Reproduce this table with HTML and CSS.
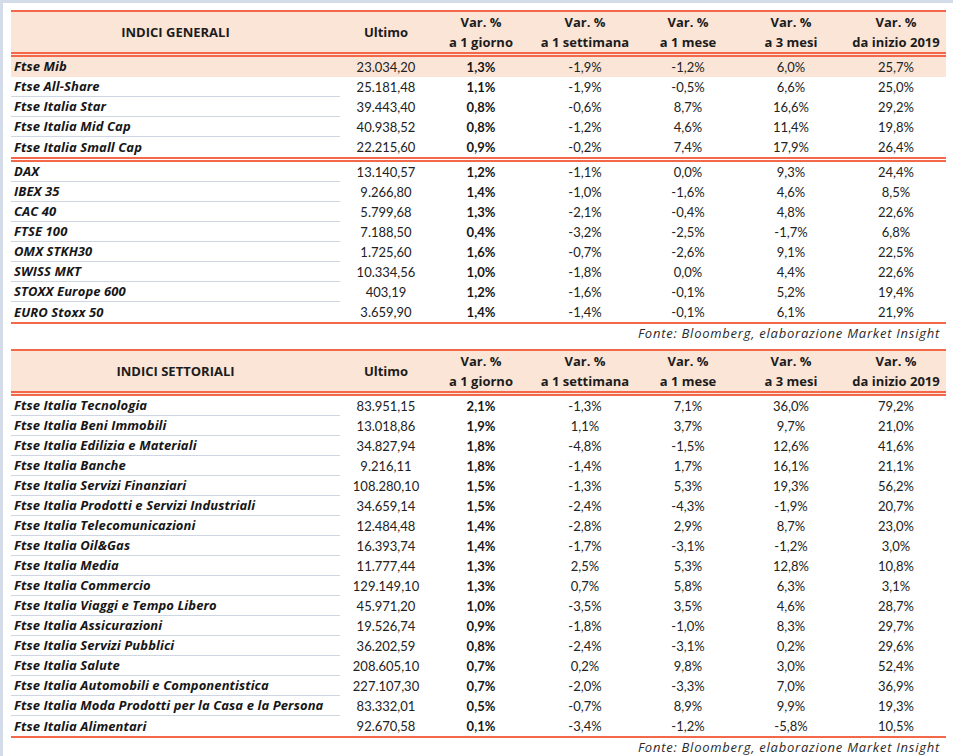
FILE: index.html
```html
<!DOCTYPE html>
<html lang="it">
<head>
<meta charset="utf-8">
<title>Indici</title>
<link rel="stylesheet" href="styles.css">
</head>
<body>
<div class="frame">
  <table class="grid">
    <colgroup>
      <col class="c-name"><col class="c-ult"><col class="c-g"><col class="c-s"><col class="c-m"><col class="c-3m"><col class="c-y">
    </colgroup>
    <thead>
      <tr>
        <th class="name-h">INDICI GENERALI</th>
        <th>Ultimo</th>
        <th><span class="l">Var. %</span><span class="l">a 1 giorno</span></th>
        <th><span class="l">Var. %</span><span class="l">a 1 settimana</span></th>
        <th><span class="l">Var. %</span><span class="l">a 1 mese</span></th>
        <th><span class="l">Var. %</span><span class="l">a 3 mesi</span></th>
        <th><span class="l">Var. %</span><span class="l">da inizio 2019</span></th>
      </tr>
    </thead>
    <tbody>
      <tr class="hl"><td class="name">Ftse Mib</td><td>23.034,20</td><td class="b">1,3%</td><td>-1,9%</td><td>-1,2%</td><td>6,0%</td><td>25,7%</td></tr>
      <tr><td class="name">Ftse All-Share</td><td>25.181,48</td><td class="b">1,1%</td><td>-1,9%</td><td>-0,5%</td><td>6,6%</td><td>25,0%</td></tr>
      <tr><td class="name">Ftse Italia Star</td><td>39.443,40</td><td class="b">0,8%</td><td>-0,6%</td><td>8,7%</td><td>16,6%</td><td>29,2%</td></tr>
      <tr><td class="name">Ftse Italia Mid Cap</td><td>40.938,52</td><td class="b">0,8%</td><td>-1,2%</td><td>4,6%</td><td>11,4%</td><td>19,8%</td></tr>
      <tr class="sep"><td class="name">Ftse Italia Small Cap</td><td>22.215,60</td><td class="b">0,9%</td><td>-0,2%</td><td>7,4%</td><td>17,9%</td><td>26,4%</td></tr>
      <tr><td class="name">DAX</td><td>13.140,57</td><td class="b">1,2%</td><td>-1,1%</td><td>0,0%</td><td>9,3%</td><td>24,4%</td></tr>
      <tr><td class="name">IBEX 35</td><td>9.266,80</td><td class="b">1,4%</td><td>-1,0%</td><td>-1,6%</td><td>4,6%</td><td>8,5%</td></tr>
      <tr><td class="name">CAC 40</td><td>5.799,68</td><td class="b">1,3%</td><td>-2,1%</td><td>-0,4%</td><td>4,8%</td><td>22,6%</td></tr>
      <tr><td class="name">FTSE 100</td><td>7.188,50</td><td class="b">0,4%</td><td>-3,2%</td><td>-2,5%</td><td>-1,7%</td><td>6,8%</td></tr>
      <tr><td class="name">OMX STKH30</td><td>1.725,60</td><td class="b">1,6%</td><td>-0,7%</td><td>-2,6%</td><td>9,1%</td><td>22,5%</td></tr>
      <tr><td class="name">SWISS MKT</td><td>10.334,56</td><td class="b">1,0%</td><td>-1,8%</td><td>0,0%</td><td>4,4%</td><td>22,6%</td></tr>
      <tr><td class="name">STOXX Europe 600</td><td>403,19</td><td class="b">1,2%</td><td>-1,6%</td><td>-0,1%</td><td>5,2%</td><td>19,4%</td></tr>
      <tr class="last"><td class="name">EURO Stoxx 50</td><td>3.659,90</td><td class="b">1,4%</td><td>-1,4%</td><td>-0,1%</td><td>6,1%</td><td>21,9%</td></tr>
    </tbody>
  </table>
  <p class="source">Fonte: Bloomberg, elaborazione Market Insight</p>

  <table class="grid">
    <colgroup>
      <col class="c-name"><col class="c-ult"><col class="c-g"><col class="c-s"><col class="c-m"><col class="c-3m"><col class="c-y">
    </colgroup>
    <thead>
      <tr>
        <th class="name-h">INDICI SETTORIALI</th>
        <th>Ultimo</th>
        <th><span class="l">Var. %</span><span class="l">a 1 giorno</span></th>
        <th><span class="l">Var. %</span><span class="l">a 1 settimana</span></th>
        <th><span class="l">Var. %</span><span class="l">a 1 mese</span></th>
        <th><span class="l">Var. %</span><span class="l">a 3 mesi</span></th>
        <th><span class="l">Var. %</span><span class="l">da inizio 2019</span></th>
      </tr>
    </thead>
    <tbody>
      <tr><td class="name">Ftse Italia Tecnologia</td><td>83.951,15</td><td class="b">2,1%</td><td>-1,3%</td><td>7,1%</td><td>36,0%</td><td>79,2%</td></tr>
      <tr><td class="name">Ftse Italia Beni Immobili</td><td>13.018,86</td><td class="b">1,9%</td><td>1,1%</td><td>3,7%</td><td>9,7%</td><td>21,0%</td></tr>
      <tr><td class="name">Ftse Italia Edilizia e Materiali</td><td>34.827,94</td><td class="b">1,8%</td><td>-4,8%</td><td>-1,5%</td><td>12,6%</td><td>41,6%</td></tr>
      <tr><td class="name">Ftse Italia Banche</td><td>9.216,11</td><td class="b">1,8%</td><td>-1,4%</td><td>1,7%</td><td>16,1%</td><td>21,1%</td></tr>
      <tr><td class="name">Ftse Italia Servizi Finanziari</td><td>108.280,10</td><td class="b">1,5%</td><td>-1,3%</td><td>5,3%</td><td>19,3%</td><td>56,2%</td></tr>
      <tr><td class="name">Ftse Italia Prodotti e Servizi Industriali</td><td>34.659,14</td><td class="b">1,5%</td><td>-2,4%</td><td>-4,3%</td><td>-1,9%</td><td>20,7%</td></tr>
      <tr><td class="name">Ftse Italia Telecomunicazioni</td><td>12.484,48</td><td class="b">1,4%</td><td>-2,8%</td><td>2,9%</td><td>8,7%</td><td>23,0%</td></tr>
      <tr><td class="name">Ftse Italia Oil&amp;Gas</td><td>16.393,74</td><td class="b">1,4%</td><td>-1,7%</td><td>-3,1%</td><td>-1,2%</td><td>3,0%</td></tr>
      <tr><td class="name">Ftse Italia Media</td><td>11.777,44</td><td class="b">1,3%</td><td>2,5%</td><td>5,3%</td><td>12,8%</td><td>10,8%</td></tr>
      <tr><td class="name">Ftse Italia Commercio</td><td>129.149,10</td><td class="b">1,3%</td><td>0,7%</td><td>5,8%</td><td>6,3%</td><td>3,1%</td></tr>
      <tr><td class="name">Ftse Italia Viaggi e Tempo Libero</td><td>45.971,20</td><td class="b">1,0%</td><td>-3,5%</td><td>3,5%</td><td>4,6%</td><td>28,7%</td></tr>
      <tr><td class="name">Ftse Italia Assicurazioni</td><td>19.526,74</td><td class="b">0,9%</td><td>-1,8%</td><td>-1,0%</td><td>8,3%</td><td>29,7%</td></tr>
      <tr><td class="name">Ftse Italia Servizi Pubblici</td><td>36.202,59</td><td class="b">0,8%</td><td>-2,4%</td><td>-3,1%</td><td>0,2%</td><td>29,6%</td></tr>
      <tr><td class="name">Ftse Italia Salute</td><td>208.605,10</td><td class="b">0,7%</td><td>0,2%</td><td>9,8%</td><td>3,0%</td><td>52,4%</td></tr>
      <tr><td class="name">Ftse Italia Automobili e Componentistica</td><td>227.107,30</td><td class="b">0,7%</td><td>-2,0%</td><td>-3,3%</td><td>7,0%</td><td>36,9%</td></tr>
      <tr><td class="name">Ftse Italia Moda Prodotti per la Casa e la Persona</td><td>83.332,01</td><td class="b">0,5%</td><td>-0,7%</td><td>8,9%</td><td>9,9%</td><td>19,3%</td></tr>
      <tr class="last"><td class="name">Ftse Italia Alimentari</td><td>92.670,58</td><td class="b">0,1%</td><td>-3,4%</td><td>-1,2%</td><td>-5,8%</td><td>10,5%</td></tr>
    </tbody>
  </table>
  <p class="source">Fonte: Bloomberg, elaborazione Market Insight</p>
</div>
</body>
</html>
```

FILE: styles.css
```css
html, body {
  margin: 0;
  padding: 0;
  background: #ffffff;
}

body {
  font-family: "Open Sans", Lato, "Liberation Sans", sans-serif;
  color: #1c1c1c;
  font-size: 13px;
}

.frame {
  border-left: 3px solid #d4dbe9;
  border-top: 3px solid #d4dbe9;
  padding: 7px 7px 0 8px;
  height: 746px;
  box-sizing: content-box;
}

.grid {
  border-collapse: separate;
  border-spacing: 0;
  width: 935px;
  table-layout: fixed;
}

.c-name { width: 329px; }
.c-ult { width: 92px; }
.c-g { width: 98px; }
.c-s { width: 110px; }
.c-m { width: 96px; }
.c-3m { width: 110px; }
.c-y { width: 100px; }

.grid th {
  background: #fbe5d6;
  border-top: 2px solid #f3674b;
  border-bottom: 5px double #f3674b;
  padding: 0;
  height: 40px;
  font-weight: 700;
  font-size: 13px;
  line-height: 20px;
  text-align: center;
  vertical-align: middle;
}

.grid th .l {
  display: block;
}

.grid td {
  padding: 0;
  height: 20px;
  line-height: 20px;
  text-align: center;
  vertical-align: middle;
  white-space: nowrap;
  font-family: Lato, "Open Sans", sans-serif;
  color: #222;
}

.grid td.name {
  font-family: "Open Sans", Lato, sans-serif;
  color: #161616;
  text-align: left;
  padding-left: 3px;
  font-weight: 700;
  font-style: italic;
  line-height: 19px;
  height: 19px;
  border-bottom: 1px solid #cfd6e3;
  letter-spacing: 0.1px;
}

.grid td.b {
  font-weight: 700;
  color: #161616;
}

.grid tr.hl td {
  background: #fbe5d6;
}

.grid tr.hl td.name {
  border-bottom-color: #fbe5d6;
}

.grid tr.sep td,
.grid tr.sep td.name {
  border-bottom: 5px double #f3674b;
  line-height: 20px;
  height: 20px;
}

.grid tr.last td,
.grid tr.last td.name {
  border-bottom: 2px solid #f3674b;
  line-height: 20px;
  height: 20px;
}

.source {
  margin: 0 0 7px;
  padding-right: 6px;
  width: 929px;
  text-align: right;
  font-style: italic;
  font-size: 13px;
  line-height: 18px;
  color: #2a2a2a;
  letter-spacing: 0.75px;
}
```
